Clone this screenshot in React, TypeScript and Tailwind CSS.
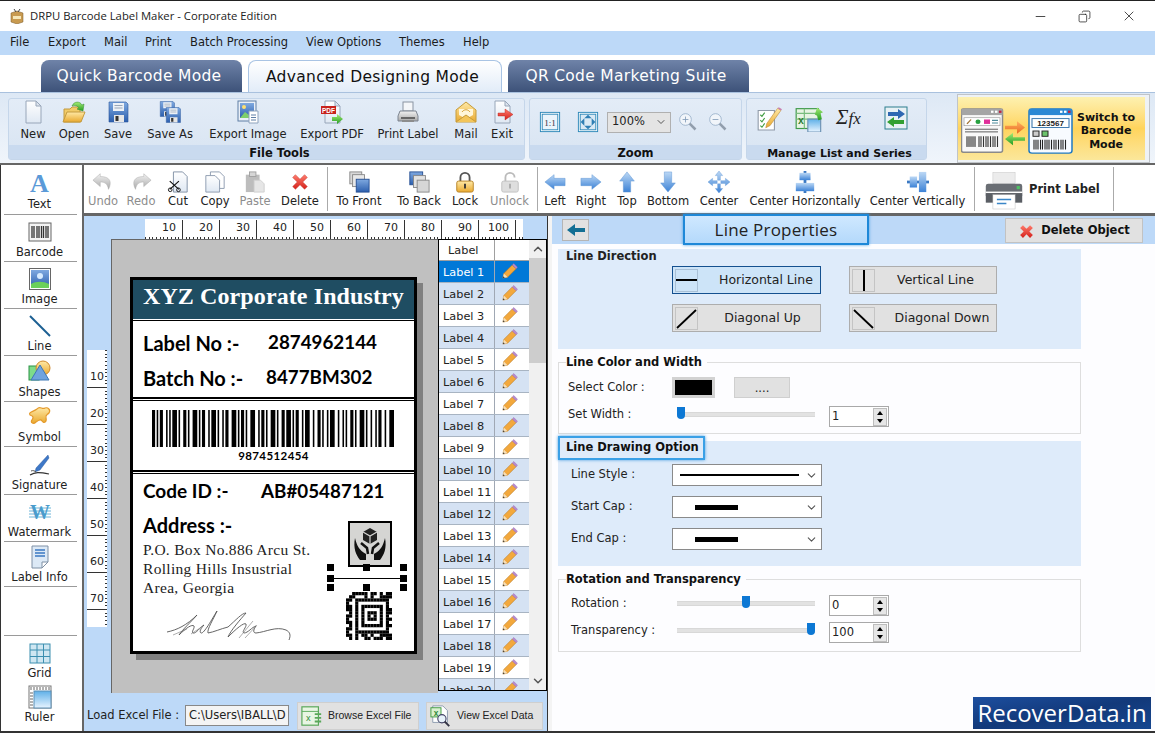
import type { ReactNode } from "react";
import { ChevronDown, ChevronUp, Minus, X, Copy } from "lucide-react";

const S = ({ s = 24, h, vb = "0 0 24 24", children }: { s?: number; h?: number; vb?: string; children: ReactNode }) => (
  <svg width={s} height={h ?? s} viewBox={vb} className="block shrink-0">
    {children}
  </svg>
);

function Gradients() {
  const g = (id: string, a: string, b: string) => (
    <linearGradient id={id} x1="0" y1="0" x2="0" y2="1">
      <stop offset="0" stopColor={a} />
      <stop offset="1" stopColor={b} />
    </linearGradient>
  );
  return (
    <svg width="0" height="0" className="block h-0">
      <defs>
        {g("gBlue", "#7fa9e0", "#2c5fae")}
        {g("gYel", "#ffe9a6", "#e9a92f")}
        {g("gGray", "#f2f2f2", "#a9a9a9")}
        {g("gDoc", "#ffffff", "#dfe8f3")}
        {g("gArrow", "#bcd8f5", "#3c82d6")}
        {g("gGreen", "#a6ec74", "#229c22")}
        {g("gRed", "#ff7d6e", "#d4201a")}
        {g("gOrange", "#ffb060", "#e86a20")}
        {g("gSky", "#5fb0e8", "#e8f4ff")}
      </defs>
    </svg>
  );
}

const Page = () => (
  <>
    <path d="M5 1h10l5 5v17H5z" fill="url(#gDoc)" stroke="#98a6b9" />
    <path d="M15 1v5h5z" fill="#dde4ee" stroke="#98a6b9" />
  </>
);

const Floppy = ({ x = 0, y = 0, k = 1 }: { x?: number; y?: number; k?: number }) => (
  <g transform={`translate(${x} ${y}) scale(${k})`}>
    <path d="M3 2h17l2 2v18H3z" fill="url(#gBlue)" stroke="#28549a" strokeWidth=".6" />
    <rect x="7" y="3" width="11" height="8" fill="#edf1f6" />
    <path d="M8.500 5.500h8M8.500 8h8" stroke="#9aa7b8" />
    <rect x="8" y="15" width="10" height="7" fill="#e6e6e6" />
    <rect x="9.500" y="16" width="3" height="5" fill="#333" />
  </g>
);

const icons: Record<string, ReactNode> = {
  new: <S><Page /></S>,
  open: (
    <S>
      <path d="M2 9h6l2-2h8v15H2z" fill="#f1cb68" stroke="#c39a3e" />
      <path d="M5 12h18l-4 10H1z" fill="url(#gYel)" stroke="#c39a3e" />
      <path d="M10 6c2-5 8-5 10-1l2-1-1 7-6-2 2-1c-1-2-4-3-7-2z" fill="url(#gGreen)" stroke="#2c8a2c" strokeWidth=".5" />
    </S>
  ),
  save: <S><Floppy /></S>,
  saveas: (
    <S>
      <Floppy x={0} y={0} k={0.75} />
      <Floppy x={6} y={6} k={0.75} />
    </S>
  ),
  exportImage: (
    <S>
      <rect x="2" y="1" width="18" height="20" fill="#e9eff7" stroke="#5f7fa6" />
      <rect x="4" y="3" width="14" height="15" fill="url(#gBlue)" />
      <path d="M4 18l5-6 4 3 5-3v6z" fill="#7ecf6a" />
      <circle cx="8" cy="7" r="2" fill="#ffe070" />
      <path d="M13 11h9v12h-9z" fill="#fff" stroke="#8ea3bd" />
      <path d="M15 15h5M15 17.500h5M15 20h5" stroke="#5f7fa6" />
    </S>
  ),
  pdf: (
    <S>
      <Page />
      <rect x="1" y="6" width="15" height="8" fill="#c8231d" />
      <text x="8.500" y="12.500" textAnchor="middle" fontSize="6.500" fontWeight="700" fill="#fff" fontFamily="Liberation Sans">PDF</text>
      <path d="M12 17h5v-3l6 5-6 5v-3h-5z" fill="url(#gGreen)" />
    </S>
  ),
  printer: (
    <S>
      <rect x="7" y="2" width="10" height="9" fill="#f4f6f9" stroke="#8a94a2" />
      <path d="M4 11h16l2 5v5H2v-5z" fill="url(#gGray)" stroke="#7c8490" />
      <rect x="5" y="17" width="14" height="2" fill="#666" />
      <rect x="6" y="20" width="12" height="2" fill="#8d8d8d" />
    </S>
  ),
  mail: (
    <S>
      <path d="M2 10L12 2l10 8v12H2z" fill="url(#gYel)" stroke="#c59b3a" />
      <path d="M5 9h14v6l-7 4-7-4z" fill="#fff6da" />
      <path d="M8 12c2-3 6-3 8 0" stroke="#d6a33a" fill="none" />
      <path d="M2 22l10-7 10 7" fill="#f3c55a" stroke="#c59b3a" />
    </S>
  ),
  exit: (
    <S>
      <Page />
      <path d="M8 13h7V9l8 5.500-8 5.500v-4H8z" fill="url(#gRed)" stroke="#b51c16" strokeWidth=".4" />
    </S>
  ),
  oneToOne: (
    <S s={22}>
      <rect x="1.500" y="1.500" width="21" height="21" fill="#fff" stroke="#2b86b8" />
      <rect x="3.500" y="3.500" width="17" height="17" fill="#eaf4fb" stroke="#2b86b8" />
      <text x="12" y="16" textAnchor="middle" fontSize="10" fill="#334" fontFamily="Liberation Serif">1:1</text>
    </S>
  ),
  fit: (
    <S s={22}>
      <rect x="1.500" y="1.500" width="21" height="21" fill="#fff" stroke="#2b86b8" />
      <rect x="3.500" y="3.500" width="17" height="17" fill="#d9e9f4" stroke="#2b86b8" />
      <path d="M12 4l4 4H8zM12 20l4-4H8zM4 12l4-4v8zM20 12l-4-4v8z" fill="#2f7fb4" />
    </S>
  ),
  zoomIn: (
    <S s={20}>
      <circle cx="9" cy="9" r="7" fill="#f3f7fb" stroke="#8fa8c4" />
      <path d="M9 5.500v7M5.500 9h7" stroke="#7a94b2" />
      <path d="M14 14l7 7" stroke="#8a97a6" strokeWidth="3" />
    </S>
  ),
  zoomOut: (
    <S s={20}>
      <circle cx="9" cy="9" r="7" fill="#f3f7fb" stroke="#8fa8c4" />
      <path d="M5.500 9h7" stroke="#7a94b2" />
      <path d="M14 14l7 7" stroke="#8a97a6" strokeWidth="3" />
    </S>
  ),
  list: (
    <S s={26}>
      <path d="M2 5h15v18H2z" fill="#fff" stroke="#8f9aa8" />
      <path d="M4 9l1.500 1.500L8 7M4 14l1.500 1.500L8 12M4 19l1.500 1.500L8 17" stroke="#3d9a3d" fill="none" />
      <path d="M10 17L20 3l3 2-10 14-4 2z" fill="url(#gYel)" stroke="#b5822a" strokeWidth=".5" />
      <path d="M20 3l1-1 3 2-1 1z" fill="#c87fb0" />
    </S>
  ),
  excelArrow: (
    <S s={28}>
      <rect x="1" y="4" width="19" height="17" fill="#e7f4e3" stroke="#3f9a4a" />
      <path d="M1 8h19M1 13h19M8 4v17" stroke="#79bd7e" />
      <text x="5" y="17" textAnchor="middle" fontSize="9" fontWeight="700" fill="#2b7d34" fontFamily="Liberation Sans">x</text>
      <path d="M11 13h11v11H11z" fill="url(#gSky)" stroke="#6e93b5" />
      <path d="M17 9l2-6 5 4-2 1 1 5-3 1-1-4z" fill="url(#gGreen)" />
    </S>
  ),
  swap: (
    <S s={24}>
      <rect x="1" y="1" width="22" height="22" fill="#e8f1f5" stroke="#2d7f8e" />
      <path d="M4 6h10V3l7 5-7 5v-3H4z" fill="#2e68b2" />
      <path d="M20 14H10v-3l-7 5 7 5v-3h10z" fill="#32a032" />
    </S>
  ),
  undo: (
    <S>
      <path d="M9 3L1 10l8 7v-5c5 0 8 2 9 8 4-8 2-14-9-14z" fill="url(#gGray)" stroke="#a8a8a8" strokeWidth=".5" />
    </S>
  ),
  redo: (
    <S>
      <path d="M15 3l8 7-8 7v-5c-5 0-8 2-9 8-4-8-2-14 9-14z" fill="url(#gGray)" stroke="#a8a8a8" strokeWidth=".5" />
    </S>
  ),
  cut: (
    <S>
      <path d="M7 1h10l5 5v17H7z" fill="url(#gDoc)" stroke="#7d8da3" />
      <path d="M3 11l10 9M13 11L3 20" stroke="#111" strokeWidth="1.300" />
      <circle cx="3.500" cy="20.500" r="2" fill="none" stroke="#111" />
      <circle cx="12.500" cy="20.500" r="2" fill="none" stroke="#111" />
    </S>
  ),
  copy: (
    <S>
      <path d="M7 1h10l5 5v13H7z" fill="#fff" stroke="#8a98ad" />
      <path d="M2 5h10l5 5v13H2z" fill="url(#gDoc)" stroke="#8a98ad" />
    </S>
  ),
  paste: (
    <S>
      <rect x="2" y="4" width="15" height="19" fill="#bdbdbd" />
      <rect x="6" y="1" width="7" height="5" fill="#d6d6d6" stroke="#a0a0a0" />
      <path d="M11 10h7l4 4v9H11z" fill="#e6e6e6" stroke="#cfcfcf" />
    </S>
  ),
  del: (
    <S>
      <path d="M4 7l3-3 5 5 5-5 3 3-5 5 5 5-3 3-5-5-5 5-3-3 5-5z" fill="url(#gRed)" stroke="#c13a30" strokeWidth=".5" />
    </S>
  ),
  toFront: (
    <S>
      <rect x="2" y="1" width="13" height="13" fill="#d8d8d8" stroke="#888" />
      <rect x="5" y="4" width="13" height="13" fill="#e8e8e8" stroke="#888" />
      <rect x="9" y="9" width="14" height="14" fill="url(#gBlue)" stroke="#254f93" />
    </S>
  ),
  toBack: (
    <S>
      <rect x="2" y="1" width="14" height="14" fill="url(#gBlue)" stroke="#254f93" />
      <rect x="6" y="5" width="13" height="13" fill="#e2e2e2" stroke="#888" />
      <rect x="10" y="10" width="13" height="13" fill="#d6d6d6" stroke="#888" />
    </S>
  ),
  lock: (
    <S>
      <path d="M7 11V7a5 5 0 0 1 10 0v4" fill="none" stroke="#555" strokeWidth="2" />
      <rect x="3" y="11" width="18" height="12" rx="2" fill="url(#gYel)" stroke="#b37f22" />
      <path d="M12 14v5" stroke="#333" strokeWidth="2" />
    </S>
  ),
  unlock: (
    <S>
      <path d="M7 11V7a5 5 0 0 1 10 0" fill="none" stroke="#bbb" strokeWidth="2" />
      <rect x="3" y="11" width="18" height="12" rx="2" fill="#dedede" stroke="#c0c0c0" />
      <path d="M12 14v5" stroke="#aaa" strokeWidth="2" />
    </S>
  ),
  left: <S><path d="M1 12l10-8v4h12v8H11v4z" fill="url(#gArrow)" stroke="#5b93d2" strokeWidth=".5" /></S>,
  right: <S><path d="M23 12L13 4v4H1v8h12v4z" fill="url(#gArrow)" stroke="#5b93d2" strokeWidth=".5" /></S>,
  top: <S><path d="M12 1L4 11h4v12h8V11h4z" fill="url(#gArrow)" stroke="#5b93d2" strokeWidth=".5" /></S>,
  bottom: <S><path d="M12 23L4 13h4V1h8v12h4z" fill="url(#gArrow)" stroke="#5b93d2" strokeWidth=".5" /></S>,
  center: (
    <S>
      <path d="M12 0l4 5h-2.500v5h-3V5H8zM12 24l4-5h-2.500v-5h-3v5H8zM0 12l5-4v2.500h5v3H5V16zM24 12l-5-4v2.500h-5v3h5V16z" fill="url(#gArrow)" stroke="#5b93d2" strokeWidth=".4" />
    </S>
  ),
  centerH: (
    <S>
      <rect x="10.500" y="0" width="3" height="24" fill="#3a78c2" />
      <rect x="6" y="2" width="12" height="8" fill="url(#gArrow)" />
      <rect x="2" y="13" width="20" height="9" fill="url(#gArrow)" />
    </S>
  ),
  centerV: (
    <S>
      <rect x="0" y="10.500" width="24" height="3" fill="#3a78c2" />
      <rect x="3" y="6" width="8" height="12" fill="url(#gArrow)" />
      <rect x="13" y="1" width="8" height="22" fill="url(#gArrow)" />
    </S>
  ),
  bigPrinter: (
    <S s={38} h={40}>
      <rect x="5" y="1" width="14" height="7" fill="#ececec" stroke="#c0c0c0" strokeWidth=".3" />
      <rect x="0.500" y="8" width="23" height="9" rx="1.500" fill="#6a6e74" />
      <rect x="20" y="9.500" width="2" height="2" fill="#4fc264" />
      <rect x="0.500" y="13" width="23" height="1" fill="#fff" />
      <rect x="0.500" y="14" width="23" height="6" fill="#5a5e64" />
      <rect x="5" y="15" width="14" height="9" fill="#fff" stroke="#bbb" strokeWidth=".3" />
      <path d="M7.500 18h9M7.500 20.500h6" stroke="#3a86c8" />
    </S>
  ),
  barcode: (
    <S>
      <rect x="1" y="3" width="22" height="18" fill="#f4f4f4" stroke="#666" />
      <path d="M4 6v12M6 6v12M9 6v12M11 6v12M13.500 6v12M15.500 6v12M18 6v12M20 6v12" stroke="#333" strokeWidth="1.300" />
    </S>
  ),
  image: (
    <S>
      <rect x="1.500" y="1.500" width="21" height="21" fill="#fff" stroke="#666" />
      <rect x="3" y="3" width="18" height="18" fill="url(#gBlue)" />
      <circle cx="12" cy="9" r="3" fill="#d8ecff" />
      <path d="M3 17c5-3 12-3 18 0v4H3z" fill="#6bd05a" />
    </S>
  ),
  line: <S><path d="M2 2l20 20" stroke="#1c5f92" strokeWidth="2" /></S>,
  shapes: (
    <S>
      <rect x="1" y="6" width="10" height="14" fill="#7ddc8a" stroke="#2d9146" />
      <circle cx="15" cy="8" r="7" fill="url(#gYel)" stroke="#d08a2c" />
      <path d="M12 5l9 15H3z" fill="#6fa3de" stroke="#3e78b5" />
    </S>
  ),
  symbol: (
    <S>
      <path d="M9 4c3-4 5 1 8-1 3-1 6 2 4 5-2 2-4 2-3 5 1 4-2 6-4 3-1-2-3-1-6 1-3 3-6 0-4-2 2-3 1-4-2-5-2-3 3-3 7-6z" fill="url(#gYel)" stroke="#e49a2c" strokeWidth="1.200" />
    </S>
  ),
  signature: (
    <S>
      <path d="M8 15L20 2l1 3-9 12-5 2z" fill="#3e78c8" stroke="#204e90" strokeWidth=".4" />
      <path d="M2 22c5-3 9-3 19-1" stroke="#333" strokeWidth="1.200" fill="none" />
      <path d="M3 18c2-1 4 0 5 1" stroke="#555" fill="none" />
    </S>
  ),
  watermark: (
    <S>
      <path d="M1 8h22M1 11h22M1 14h22M1 17h22" stroke="#6db4d8" />
      <text x="12" y="19" textAnchor="middle" fontSize="20" fontWeight="700" fill="#4a9ccc" fontFamily="Liberation Serif">W</text>
    </S>
  ),
  info: (
    <S>
      <path d="M4 1h16v16l-6 6H4z" fill="#dce9f6" stroke="#7f90a5" />
      <path d="M7 5h10M7 8h10M7 11h10" stroke="#3a78c2" strokeWidth="1.300" />
      <path d="M14 23v-6h6z" fill="#fff" stroke="#7f90a5" />
    </S>
  ),
  grid: (
    <S>
      <rect x="2" y="3" width="20" height="19" fill="#cfe7f2" stroke="#3c8fb0" />
      <path d="M2 9h20M2 15.500h20M9 3v19M15.500 3v19" stroke="#3c8fb0" />
    </S>
  ),
  ruler: (
    <S>
      <rect x="1" y="1" width="22" height="22" fill="#fff" stroke="#777" />
      <rect x="6" y="6" width="17" height="17" fill="url(#gSky)" stroke="#5d8fb5" />
      <path d="M3 2v3M6 2v3M9 2v3M12 2v3M15 2v3M18 2v3M21 2v3M2 8h3M2 11h3M2 14h3M2 17h3M2 20h3" stroke="#666" />
    </S>
  ),
  excel: (
    <S s={22}>
      <rect x="1" y="2" width="18" height="20" fill="#e8f5e3" stroke="#59a85a" strokeWidth="1.300" />
      <path d="M1 7h18" stroke="#59a85a" />
      <text x="8" y="17" textAnchor="middle" fontSize="10" fill="#2f8a3a" fontFamily="Liberation Sans">x</text>
      <path d="M15 10h7M15 14h7M15 18h7" stroke="#59a85a" strokeWidth="2" />
    </S>
  ),
  excelZoom: (
    <S s={22}>
      <path d="M3 1h11l5 5v13H3z" fill="#fff" stroke="#8a98ad" />
      <rect x="1" y="3" width="11" height="10" fill="#d9f0d0" stroke="#3c983c" />
      <text x="6.500" y="11.500" textAnchor="middle" fontSize="9" fontWeight="700" fill="#2f8a3a" fontFamily="Liberation Sans">x</text>
      <circle cx="13" cy="15" r="4.500" fill="#e8f3fb" stroke="#446" strokeWidth="1.200" />
      <path d="M16 18l5 5" stroke="#334" strokeWidth="2" />
    </S>
  ),
};

const Pencil = () => (
  <svg width="17" height="17" viewBox="0 0 18 18" className="block">
    <path d="M2 16l1-5L12 2l4 4-9 9z" fill="#f3a83c" stroke="#b87a24" strokeWidth=".6" />
    <path d="M12 2l1.500-1.500 4 4L16 6z" fill="#b98ad0" stroke="#8b62a0" strokeWidth=".4" />
    <path d="M2 16l1-5 4 4z" fill="#f6dfb8" />
    <path d="M2 16l.500-2 1.500 1.500z" fill="#333" />
  </svg>
);

const Tool = ({ icon, label, w, dim }: { icon: ReactNode; label: string; w: string; dim?: boolean }) => (
  <div className={`${w} flex flex-col items-center shrink-0 gap-[3px]`}>
    {icon}
    <span className={`whitespace-nowrap leading-[14px] ${dim ? "text-[#8d8d8d]" : "text-[#222]"}`}>{label}</span>
  </div>
);

// edit toolbar item: same thing, slightly smaller icon
const EditTool = ({ icon, label, w, dim }: { icon: ReactNode; label: string; w: string; dim?: boolean }) => (
  <div className={`${w} flex flex-col items-center shrink-0 gap-[1px] [&_svg]:size-[22px]`}>
    {icon}
    <span className={`whitespace-nowrap leading-[14px] ${dim ? "text-[#8d8d8d]" : "text-[#222]"}`}>{label}</span>
  </div>
);

function RibbonGroup({ title, w, band = "", body = "", children }: { title: string; w: string; band?: string; body?: string; children: ReactNode }) {
  return (
    <div className={`${w} h-[62px] shrink-0 flex flex-col rounded-[3px] border border-[#c5d6ea] bg-gradient-to-b from-[#e3ecf7] to-[#d8e4f2]`}>
      <div className={`h-[46px] flex items-center pl-[3px] ${body}`}>{children}</div>
      <div className={`h-[14px] bg-[#c9daef] flex items-center justify-center pt-[3px] font-bold text-[#111] leading-none whitespace-nowrap ${band}`}>{title}</div>
    </div>
  );
}

const Tab = ({ label, w, active }: { label: string; w: string; active?: boolean }) => (
  <div
    className={`${w} h-[32px] rounded-t-[8px] flex items-center justify-center pr-[5px] pt-[2px] text-[15.500px] tracking-[.3px] ${
      active
        ? "bg-gradient-to-b from-white to-[#e2ecf8] border border-b-0 border-[#a9c4e4] text-[#111]"
        : "bg-gradient-to-b from-[#6f83a8] to-[#3d5279] text-white"
    }`}
  >
    {label}
  </div>
);

const sideItems = [
  { i: "barcode", l: "Barcode", h: "h-[47px]" },
  { i: "image", l: "Image", h: "h-[47px]" },
  { i: "line", l: "Line", h: "h-[47px]" },
  { i: "shapes", l: "Shapes", h: "h-[46px]" },
  { i: "symbol", l: "Symbol", h: "h-[45px]" },
  { i: "signature", l: "Signature", h: "h-[48px]" },
  { i: "watermark", l: "Watermark", h: "h-[47px]" },
  { i: "info", l: "Label Info", h: "h-[45px]" },
];

const SideItem = ({ icon, label, h }: { icon: string; label: string; h: string }) => (
  <div className={`${h} ml-[3px] mr-[5px] pr-[2px] flex flex-col items-center justify-end pb-[1px] border-b border-[#9a9a9a]`}>
    {icons[icon]}
    <span className="leading-[16px] text-[#222]">{label}</span>
  </div>
);

function HRuler() {
  const nums = [10, 20, 30, 40, 50, 60, 70, 80, 90, 100];
  return (
    <div className="ml-[34px] w-[378px] h-[20px] bg-white flex flex-col justify-end">
      <div className="flex h-[17px] pl-[1px]">
        {nums.map((n) => (
          <div key={n} className="w-[37px] border-r border-[#333] text-right pr-[6px] text-[11px] leading-[16px] text-[#222]">
            {n}
          </div>
        ))}
      </div>
      <div className="h-[2px] bg-[repeating-linear-gradient(to_right,#333_0,#333_1px,transparent_1px,transparent_3.700px)]" />
    </div>
  );
}

function VRuler() {
  const nums = [10, 20, 30, 40, 50, 60, 70];
  return (
    <div className="w-[20px] h-[277px] mt-[134px] bg-white shrink-0 flex">
      <div className="flex-1 pt-[1px]">
        {nums.map((n) => (
          <div key={n} className="h-[37px] border-b border-[#333] flex items-end justify-end text-[11px] leading-[20px] pr-[1px] text-[#222]">
            {n}
          </div>
        ))}
      </div>
      <div className="w-[2px] bg-[repeating-linear-gradient(to_bottom,#333_0,#333_1px,transparent_1px,transparent_3.700px)]" />
    </div>
  );
}

const barWidths = [2, 1, 1, 1, 2, 2, 1, 1, 1, 1, 3, 1, 1, 2, 2, 1, 1, 2, 3, 1, 1, 1, 2, 2, 1, 1, 3, 1, 1, 2, 1, 1, 2, 2, 3, 1, 1, 1, 2, 1, 1, 2, 3, 2, 1, 1, 2, 1, 1, 2, 3, 1, 1, 2, 2, 1, 3, 1, 1, 1, 2, 2, 1, 1, 3, 2, 1, 2, 2, 1, 1, 2, 1, 1, 3, 2, 1, 2, 1, 1, 1, 2, 2, 1, 1, 2, 3, 1, 1, 2, 1, 2, 1, 1, 2, 2, 1, 2, 3];

function Barcode() {
  let x = 0;
  const rects: ReactNode[] = [];
  barWidths.forEach((w, i) => {
    if (i % 2 === 0) rects.push(<rect key={i} x={x} y="0" width={w} height="37" fill="#000" />);
    x += w;
  });
  return (
    <svg width="242" height="37" viewBox={`0 0 ${x} 37`} preserveAspectRatio="none" className="block">
      {rects}
    </svg>
  );
}

const codeRows = [
  "..#####.##.#.##",
  ".##...#.#..####",
  "##.###########.",
  "#..#.........#.",
  "##.#.#######.#.",
  "##.#.#.....#.##",
  ".#.#.#.###.#.##",
  "##.#.#.#.#.#.#.",
  "#..#.#.###.#.##",
  "##.#.#.....#.#.",
  ".#.#.#######.##",
  "##.#.........#.",
  "#..###########.",
  "##.#.##.#..####",
  ".#.#..##.###.##",
];

function DataCode() {
  return (
    <svg width="46" height="48" viewBox="0 0 15 15" preserveAspectRatio="none" className="block">
      {codeRows.map((r, y) =>
        r.split("").map((c, x) => (c === "#" ? <rect key={`${x}-${y}`} x={x} y={y} width="1.020" height="1.020" fill="#000" /> : null))
      )}
    </svg>
  );
}

function Label() {
  return (
    <div className="ml-[18px] mt-[37px] w-[287px] h-[377px] border-[3px] border-black bg-white shadow-[6px_6px_0_#808080] flex flex-col text-black relative">
      <div className="h-[40px] shrink-0 bg-[#1f4d62] border-b border-white flex items-center pl-[10px] pb-[7px] font-['Liberation_Serif',serif] font-bold text-[24px] tracking-[.1px] text-white">
        XYZ Corporate Industry
      </div>
      <div className="h-[79px] shrink-0 border-t border-black border-b-2 flex flex-col gap-[5px] pt-[7px] pl-[10px] font-['Lato',sans-serif] font-bold text-[20px]">
        <div className="flex">
          <span className="w-[125px]">Label No :-</span>
          <span className="text-[18.800px]">2874962144</span>
        </div>
        <div className="flex">
          <span className="w-[123px]">Batch No :-</span>
          <span className="text-[18.800px]">8477BM302</span>
        </div>
      </div>
      <div className="h-[72px] shrink-0 mt-[1px] border-t border-black border-b-2 flex flex-col items-center pt-[9px] font-['Lato',sans-serif] font-bold text-[11.500px] leading-[16px] tracking-[.4px]">
        <div className="ml-[-2px]"><Barcode /></div>
        <span className="mt-[1px]">9874512454</span>
      </div>
      <div className="flex-1 mt-[1px] border-t border-black pl-[10px] pt-[3px] font-['Lato',sans-serif] font-bold text-[20px]">
        <div className="flex">
          <span className="w-[118px] text-[19px]">Code ID :-</span>
          <span className="text-[18.800px]">AB#05487121</span>
        </div>
        <div className="mt-[7px] text-[20px] leading-[24px]">Address :-</div>
        <div className="mt-[3px] font-['Liberation_Serif',serif] font-normal text-[15.500px] leading-[19px] tracking-[.3px] text-[#222]">
          <div>P.O. Box No.886 Arcu St.</div>
          <div>Rolling Hills Insustrial</div>
          <div>Area, Georgia</div>
        </div>
      </div>
      <div className="absolute left-[215px] top-[241px] w-[44px] h-[46px] border-2 border-black bg-[#d5d5d3] flex items-center justify-center">
        <svg width="34" height="36" viewBox="0 0 34 36" className="block">
          <path d="M17 2l7 4v8l-7 4-7-4V6z" fill="#222" />
          <path d="M10 6l7 4 7-4M17 10v8" stroke="#d5d5d3" strokeWidth="1.200" fill="none" />
          <path d="M2 12c2 8 4 12 11 16v6H7c-4-5-7-12-5-22zM32 12c-2 8-4 12-11 16v6h6c4-5 7-12 5-22z" fill="#111" />
          <path d="M8 17l6 5 1 6M26 17l-6 5-1 6" stroke="#111" strokeWidth="2.500" fill="none" />
        </svg>
      </div>
      <div className="absolute left-[197px] top-[298px] w-[73px] h-px bg-black" />
      {[
        "left-[194px] top-[284px]",
        "left-[230px] top-[284px]",
        "left-[267px] top-[284px]",
        "left-[194px] top-[295px]",
        "left-[267px] top-[295px]",
        "left-[194px] top-[304px]",
        "left-[230px] top-[304px]",
        "left-[267px] top-[304px]",
      ].map((p) => (
        <div key={p} className={`absolute ${p} w-[7px] h-[7px] bg-black`} />
      ))}
      <div className="absolute left-[213px] top-[312px]"><DataCode /></div>
      <svg width="150" height="34" viewBox="0 0 150 34" className="absolute left-[32px] top-[330px]">
        <path d="M2 22c10-2 20-7 30-17-7 8-14 14-18 20 7-7 13-11 15-9 1 2-3 6-1 7 3 1 7-6 11-8-3 3-5 7-3 8 3 1 11-14 16-22-4 9-10 18-9 22 6-1 12-4 20-6 8-7 14-14 18-14-6 7-15 17-18 24 8-8 16-15 18-13 1 3-5 8-2 9 4 0 8-6 12-7-3 4-3 7 0 7 10-1 20-7 30-3 4 2 5 5 3 10" fill="none" stroke="#555" strokeWidth=".9" />
        <path d="M8 25l14-6M74 28l14-17M80 28l12-13M26 24l9-6" fill="none" stroke="#777" strokeWidth=".6" />
      </svg>
    </div>
  );
}

function LabelList() {
  const rows = Array.from({ length: 20 }, (_, i) => i + 1);
  return (
    <div className="w-[109px] h-[452px] border border-black bg-white flex shrink-0 overflow-hidden text-[11.300px]">
      <div className="w-[90px] overflow-hidden">
        <div className="h-[21px] flex border-b border-[#a0a0a0]">
          <div className="w-[56px] border-r border-[#a0a0a0] pl-[9px] leading-[22px]">Label</div>
        </div>
        {rows.map((n) => {
          const sel = n === 1;
          const odd = n % 2 === 0;
          return (
            <div key={n} className={`h-[22px] flex border-b border-[#a8b4c2] ${sel ? "bg-[#0078d7] text-white" : odd ? "bg-[#d5e2f3]" : "bg-white"}`}>
              <div className="w-[56px] border-r border-[#a0a8b4] pl-[4px] leading-[23px] whitespace-nowrap">Label {n}</div>
              <div className="flex-1 flex items-center justify-center pr-[5px]"><Pencil /></div>
            </div>
          );
        })}
      </div>
      <div className="flex-1 bg-[#f0f0f0] flex flex-col items-center">
        <ChevronUp size={14} strokeWidth={2.500} className="my-[2px] text-[#555]" />
        <div className="w-full h-[105px] bg-[#cdcdcd]" />
        <ChevronDown size={14} strokeWidth={2.500} className="mt-auto mb-[2px] text-[#555]" />
      </div>
    </div>
  );
}

const DirButton = ({ label, active, pad = "", children }: { label: string; active?: boolean; pad?: string; children: ReactNode }) => (
  <div className={`h-[28px] flex items-center border pl-[2px] ${active ? "bg-[#cde4f8] border-[#14508f]" : "bg-[#e1e1e1] border-[#adadad]"}`}>
    <div className={`w-[23px] h-[23px] border flex items-center justify-center ${active ? "border-[#a9c0d6]" : "border-[#c4c4c4]"}`}>{children}</div>
    <span className={`flex-1 text-center text-[12.500px] text-[#222] pt-[1px] ${pad}`}>{label}</span>
  </div>
);

const Legend = ({ children }: { children: ReactNode }) => (
  <legend className="ml-[7px] pr-[5px] font-bold leading-[14px] text-[#111]">{children}</legend>
);

const Slider = ({ pos }: { pos: string }) => (
  <div className="w-[138px] h-[5px] mb-[4px] bg-[#e2e2e2] border-y border-[#d8d8d8] relative shrink-0">
    <div className={`absolute ${pos} top-[-6px] w-[8px] h-[12px] bg-[#0d78d4] rounded-b-[4px]`} />
  </div>
);

const Spin = ({ v }: { v: string }) => (
  <div className="w-[60px] h-[21px] ml-[14px] border border-[#a9a9a9] bg-white flex items-center justify-between shrink-0">
    <span className="pl-[2px]">{v}</span>
    <div className="w-[14px] h-[18px] mr-[1px] bg-[#e6e6e6] border border-[#bdbdbd] flex flex-col items-center justify-around">
      <div className="w-0 h-0 border-x-[3px] border-x-transparent border-b-[4px] border-b-black" />
      <div className="w-0 h-0 border-x-[3px] border-x-transparent border-t-[4px] border-t-black" />
    </div>
  </div>
);

const StyleSelect = ({ label, bar }: { label: string; bar: ReactNode }) => (
  <div className="flex items-center h-[22px]">
    <span className="w-[114px] pl-[13px] text-[#222]">{label}</span>
    <div className="w-[150px] h-[22px] bg-white border border-[#8a8a8a] flex items-center">
      {bar}
      <ChevronDown size={13} className="ml-auto mr-[3px] text-[#555]" />
    </div>
  </div>
);

const SoftButton = ({ icon, label, w }: { icon: ReactNode; label: string; w: string }) => (
  <div className={`${w} h-[28px] flex items-center gap-[5px] bg-[#e1e1e1] border border-[#cfcfcf] pl-[3px] shrink-0 font-['Liberation_Sans',sans-serif] text-[10.500px] text-[#222]`}>
    {icon}
    <span className="whitespace-nowrap">{label}</span>
  </div>
);

const SwitchArt = () => (
  <svg width="112" height="46" viewBox="0 0 112 52" preserveAspectRatio="none" className="block shrink-0 mt-[5px]">
    <rect x="0.500" y="1" width="41" height="49" rx="2" fill="#f8f8f8" stroke="#8a8a8a" strokeWidth="1.500" />
    <rect x="0.500" y="1" width="41" height="7" fill="#a5a5a5" />
    <rect x="30" y="3" width="2.500" height="2.500" fill="#fff" />
    <rect x="34" y="3" width="2.500" height="2.500" fill="#fff" />
    <rect x="38" y="3" width="2.500" height="2.500" fill="#c02040" />
    <rect x="3" y="11" width="36" height="9" fill="#fff" stroke="#999" strokeWidth=".7" />
    <path d="M6 18l4-5" stroke="#a07030" strokeWidth="1.300" />
    <circle cx="17" cy="15.500" r="2.500" fill="#27a040" />
    <rect x="23" y="13" width="6" height="5" fill="#e0309a" />
    <path d="M31 14h6M31 17h6" stroke="#4a8a9a" strokeWidth="1.300" />
    <path d="M4 24h33M4 27h33" stroke="#555" />
    <rect x="5" y="32" width="10" height="12" fill="#555" opacity=".7" />
    <path d="M18 32v12M20 32v12M22.500 32v12M25 32v12M27 32v12M29.500 32v12M32 32v12M34 32v12M36.500 32v12" stroke="#333" strokeWidth="1.100" />
    <path d="M44 20h12v-5l8 7-8 7v-5H44z" fill="url(#gOrange)" />
    <path d="M64 33H52v-5l-8 7 8 7v-5h12z" fill="url(#gGreen)" />
    <g transform="translate(-4 0)">
      <rect x="72" y="1" width="43" height="50" rx="3" fill="#f8fbff" stroke="#1f7ac4" strokeWidth="1.500" />
      <rect x="72" y="1" width="43" height="7" fill="#2b88d4" />
      <rect x="103" y="3" width="2.500" height="2.500" fill="#fff" />
      <rect x="107" y="3" width="2.500" height="2.500" fill="#fff" />
      <rect x="111" y="3" width="2.500" height="2.500" fill="#c02040" />
      <rect x="75" y="12" width="37" height="10" fill="#fff" stroke="#2b6da8" strokeWidth="1" />
      <text x="93.500" y="20.500" textAnchor="middle" fontSize="8" fontWeight="700" fill="#222" fontFamily="Liberation Sans">123567</text>
      <rect x="76" y="26" width="6" height="6" fill="#ccc" stroke="#222" />
      <rect x="85" y="26" width="6" height="6" fill="#6cc36c" stroke="#222" />
      <path d="M77 36v11M79 36v11M81 36v11M83.500 36v11M85.500 36v11M88 36v11M90 36v11M92 36v11M94.500 36v11M97 36v11M99 36v11M101.500 36v11M104 36v11M106 36v11M108.500 36v11" stroke="#222" strokeWidth="1.100" />
    </g>
  </svg>
);

export default function App() {
  return (
    <div className="w-[1155px] h-[733px] overflow-hidden bg-white flex flex-col border-t border-[#222] font-['DejaVu_Sans',sans-serif] text-[11.500px] text-[#222]">
      <Gradients />
      {/* title bar */}
      <div className="h-[30px] flex items-center shrink-0 bg-white">
        <svg width="16" height="16" viewBox="0 0 16 16" className="block ml-[9px]">
          <path d="M2 5l6-2 6 2v9l-6 2-6-2z" fill="#c89a50" stroke="#7a5a2a" strokeWidth=".5" />
          <path d="M5 1l2 3M11 1l-2 3" stroke="#444" />
          <path d="M4 8h8v3H4z" fill="#f6e7b8" />
        </svg>
        <span className="ml-[5px] font-['Open_Sans',sans-serif] text-[11.300px] text-[#222]">DRPU Barcode Label Maker - Corporate Edition</span>
        <div className="ml-auto flex items-center gap-[30px] pr-[18px] text-[#222]">
          <Minus size={15} strokeWidth={1.300} />
          <Copy size={13} strokeWidth={1.400} className="-scale-x-100" />
          <X size={16} strokeWidth={1.200} />
        </div>
      </div>
      {/* menu */}
      <div className="h-[24px] shrink-0 bg-[#bdd9f8] flex items-center pl-[10px] text-[#1c1c1c]">
        <span className="w-[38px]">File</span>
        <span className="w-[56px]">Export</span>
        <span className="w-[41px]">Mail</span>
        <span className="w-[45px]">Print</span>
        <span className="w-[116px]">Batch Processing</span>
        <span className="w-[93px]">View Options</span>
        <span className="w-[64px]">Themes</span>
        <span>Help</span>
      </div>
      {/* mode tabs */}
      <div className="h-[37px] shrink-0 flex items-end pl-[41px] gap-[6px]">
        <Tab label="Quick Barcode Mode" w="w-[201px]" />
        <Tab label="Advanced Designing Mode" w="w-[254px]" active />
        <Tab label="QR Code Marketing Suite" w="w-[241px]" />
      </div>
      {/* ribbon */}
      <div className="h-[71px] shrink-0 bg-gradient-to-b from-[#dde8f5] to-[#f0f5fb] border-t border-[#a9c1de] flex items-center pl-[8px]">
        <div className="self-start mt-[5px] flex gap-[4px]">
          <RibbonGroup title="File Tools" w="w-[517px]" band="pl-[26px]" body="pb-[3px]">
            <Tool w="w-[42px]" icon={icons.new} label="New" />
            <Tool w="w-[40px]" icon={icons.open} label="Open" />
            <Tool w="w-[48px]" icon={icons.save} label="Save" />
            <Tool w="w-[56px]" icon={icons.saveas} label="Save As" />
            <Tool w="w-[100px]" icon={icons.exportImage} label="Export Image" />
            <Tool w="w-[68px]" icon={icons.pdf} label="Export PDF" />
            <Tool w="w-[84px]" icon={icons.printer} label="Print Label" />
            <Tool w="w-[32px]" icon={icons.mail} label="Mail" />
            <Tool w="w-[40px]" icon={icons.exit} label="Exit" />
          </RibbonGroup>
          <RibbonGroup title="Zoom" w="w-[213px]">
            <div className="flex items-center pl-[6px] gap-[16px]">
              {icons.oneToOne}
              {icons.fit}
            </div>
            <div className="ml-[8px] w-[64px] h-[21px] bg-[#e4e4e4] border border-[#b0b0b0] flex items-center pl-[4px]">
              100%
              <ChevronDown size={12} className="ml-auto mr-[3px] text-[#555]" />
            </div>
            <div className="ml-[7px] flex gap-[10px] opacity-90">
              {icons.zoomIn}
              {icons.zoomOut}
            </div>
          </RibbonGroup>
          <RibbonGroup title="Manage List and Series" w="w-[181px]" band="pl-[6px] text-[11px]" body="pb-[9px]">
            <div className="flex items-center pl-[6px] gap-[13px]">
              {icons.list}
              {icons.excelArrow}
              <span className="w-[30px] font-['Liberation_Serif',serif] text-[21px] leading-none italic text-[#222] whitespace-nowrap">Σ<span className="text-[17px]">fx</span></span>
              <span className="ml-[5px]">{icons.swap}</span>
            </div>
          </RibbonGroup>
        </div>
        <div className="ml-[30px] w-[193px] h-[69px] border border-[#c0c4c8] bg-[#eef2f6] flex items-center">
          <div className="w-[187px] h-[63px] bg-gradient-to-b from-[#fdf1b0] via-[#ffd45c] to-[#fbe79a] flex items-center pl-[3px] gap-[4px]">
            <SwitchArt />
            <div className="pt-[6px] text-center font-bold text-[11px] leading-[13.500px] text-[#111] whitespace-nowrap">
              Switch to<br />Barcode<br />Mode
            </div>
          </div>
        </div>
      </div>
      <div className="h-[2px] shrink-0 bg-[#666]" />
      {/* work area */}
      <div className="flex-1 min-h-0 flex border-b-2 border-[#333]">
        <div className="w-[84px] shrink-0 bg-white border-l border-[#333] border-r-2 border-r-[#666] flex flex-col">
          <div className="h-[50px] ml-[3px] mr-[5px] pr-[2px] flex flex-col items-center border-b border-[#9a9a9a] pt-[7px]">
            <span className="h-[24px] font-['Liberation_Serif',serif] font-bold text-[26px] leading-[24px] text-[#5b9ad8]">A</span>
            <span className="leading-[15px] mt-[1px]">Text</span>
          </div>
          {sideItems.map((it) => (
            <SideItem key={it.i} icon={it.i} label={it.l} h={it.h} />
          ))}
          <div className="mt-[48px] ml-[3px] mr-[5px] pr-[2px] border-t border-[#9a9a9a] flex flex-col items-center pt-[5px]">
            {icons.grid}
            <span className="leading-[16px]">Grid</span>
            <span className="mt-[4px]">{icons.ruler}</span>
            <span className="leading-[16px]">Ruler</span>
          </div>
        </div>
        <div className="flex-1 min-w-0 flex flex-col">
          {/* edit toolbar */}
          <div className="h-[48px] shrink-0 bg-white flex items-center">
            <EditTool w="w-[38px]" icon={icons.undo} label="Undo" dim />
            <EditTool w="w-[38px]" icon={icons.redo} label="Redo" dim />
            <EditTool w="w-[36px]" icon={icons.cut} label="Cut" />
            <EditTool w="w-[38px]" icon={icons.copy} label="Copy" />
            <EditTool w="w-[42px]" icon={icons.paste} label="Paste" dim />
            <EditTool w="w-[48px]" icon={icons.del} label="Delete" />
            <div className="w-px h-[44px] ml-[3px] bg-[#aaa]" />
            <EditTool w="w-[62px]" icon={icons.toFront} label="To Front" />
            <EditTool w="w-[58px]" icon={icons.toBack} label="To Back" />
            <EditTool w="w-[34px]" icon={icons.lock} label="Lock" />
            <EditTool w="w-[55px]" icon={icons.unlock} label="Unlock" dim />
            <div className="w-px h-[44px] bg-[#aaa]" />
            <EditTool w="w-[34px]" icon={icons.left} label="Left" />
            <EditTool w="w-[38px]" icon={icons.right} label="Right" />
            <EditTool w="w-[34px]" icon={icons.top} label="Top" />
            <EditTool w="w-[48px]" icon={icons.bottom} label="Bottom" />
            <EditTool w="w-[54px]" icon={icons.center} label="Center" />
            <EditTool w="w-[118px]" icon={icons.centerH} label="Center Horizontally" />
            <EditTool w="w-[107px]" icon={icons.centerV} label="Center Vertically" />
            <div className="w-px h-[44px] ml-[3px] bg-[#aaa]" />
            <div className="w-[138px] flex items-center pl-[10px] pt-[2px] gap-[6px]">
              {icons.bigPrinter}
              <span className="font-bold whitespace-nowrap">Print Label</span>
            </div>
            <div className="w-px h-[44px] bg-[#aaa]" />
          </div>
          <div className="h-[3px] shrink-0 bg-[#666]" />
          <div className="flex-1 min-h-0 flex">
            {/* designer */}
            <div className="w-[464px] shrink-0 bg-[#bdd9f8] flex flex-col border-r border-[#333]">
              <div className="h-[479px] flex pl-[3px] gap-[4px] overflow-hidden">
                <VRuler />
                <div className="flex flex-col pt-[3px]">
                  <HRuler />
                  <div className="flex">
                    <div className="w-[327px] h-[454px] bg-[#c0c0c0] border-l border-t border-[#666]">
                      <Label />
                    </div>
                    <LabelList />
                  </div>
                </div>
              </div>
              <div className="flex-1 flex items-center pl-[3px] pt-[5px]">
                <span className="w-[98px] whitespace-nowrap">Load Excel File :</span>
                <div className="w-[104px] h-[21px] border border-[#888] bg-[#f4f4f4] pl-[3px] leading-[19px] overflow-hidden whitespace-nowrap">C:\Users\IBALL\D</div>
                <div className="ml-[8px]"><SoftButton w="w-[122px]" icon={icons.excel} label="Browse Excel File" /></div>
                <div className="ml-[7px]"><SoftButton w="w-[117px]" icon={icons.excelZoom} label="View Excel Data" /></div>
              </div>
            </div>
            <div className="w-[4px] shrink-0 bg-[#f4f4f4]" />
            {/* properties */}
            <div className="flex-1 min-w-0 bg-[#fdfdff] flex flex-col">
              <div className="h-[28px] shrink-0 bg-[#bdd9f8] flex items-center pl-[10px] pr-[12px] relative">
                <div className="w-[27px] h-[22px] bg-[#e1e1e1] border border-[#b5b5b5] flex items-center justify-center">
                  <svg width="18" height="14" viewBox="0 0 18 14" className="block"><path d="M0 7l8-6v4h10v4H8v4z" fill="#136f94" /></svg>
                </div>
                <div className="absolute left-[131px] top-[-2px] w-[186px] h-[31px] bg-gradient-to-b from-[#cfe8ff] to-[#b4d9fb] border-2 border-[#1e88d8] shadow-[0_0_3px_#4a9fe0] flex items-center justify-center font-['Open_Sans',sans-serif] text-[17px] tracking-[.2px] text-[#222]">
                  Line Properties
                </div>
                <div className="ml-auto w-[138px] h-[25px] pt-[2px] bg-[#e1e1e1] border border-[#c2c2c2] flex items-center justify-center gap-[6px] font-bold text-[#111]">
                  <svg width="17" height="17" viewBox="0 0 24 24" className="block"><path d="M3 7l4-4 5 5 5-5 4 4-5 5 5 5-4 4-5-5-5 5-4-4 5-5z" fill="url(#gRed)" /></svg>
                  Delete Object
                </div>
              </div>
              <div className="flex-1 min-h-0 pl-[6px] pt-[5px] flex flex-col">
                <div className="w-[523px] h-[100px] shrink-0 bg-[#deebfa]">
                  <div className="h-[17px] pl-[8px] font-bold leading-[15px]">Line Direction</div>
                  <div className="ml-[114px] w-[325px] grid grid-cols-[149px_148px] gap-x-[28px] gap-y-[10px]">
                    <DirButton label="Horizontal Line" active pad="pl-[14px]">
                      <div className="w-[21px] h-[2px] bg-black" />
                    </DirButton>
                    <DirButton label="Vertical Line">
                      <div className="w-[2px] h-[21px] bg-black" />
                    </DirButton>
                    <DirButton label="Diagonal Up" pad="pl-[7px]">
                      <svg width="21" height="21" viewBox="0 0 21 21" className="block"><path d="M1 20L20 2" stroke="#000" strokeWidth="1.800" /></svg>
                    </DirButton>
                    <DirButton label="Diagonal Down" pad="pl-[13px]">
                      <svg width="21" height="21" viewBox="0 0 21 21" className="block"><path d="M1 2l19 18" stroke="#000" strokeWidth="1.800" /></svg>
                    </DirButton>
                  </div>
                </div>
                <fieldset className="w-[523px] h-[79px] mt-[6px] shrink-0 border border-[#dedede]">
                  <Legend>Line Color and Width</Legend>
                  <div className="flex items-center h-[22px] mt-[7px]">
                    <span className="w-[113px] pl-[9px] pt-[2px]">Select Color :</span>
                    <div className="w-[43px] h-[21px] border-[3px] border-[#d2d2d2] bg-black" />
                    <div className="ml-[19px] w-[56px] h-[21px] bg-[#e1e1e1] border border-[#cfcfcf] text-center leading-[20px]">....</div>
                  </div>
                  <div className="flex items-center h-[21px] mt-[8px]">
                    <span className="w-[118px] pl-[9px] mb-[4px]">Set Width :</span>
                    <Slider pos="left-0" />
                    <Spin v="1" />
                  </div>
                </fieldset>
                <div className="w-[523px] h-[125px] mt-[7px] shrink-0 bg-[#deebfa] relative flex flex-col pt-[23px] gap-[10px]">
                  <div className="absolute left-0 top-[-5px] w-[147px] h-[24px] bg-[#deebfa] border-2 border-[#3aa0e6] shadow-[0_0_3px_#4a9fe0] flex items-center pl-[6px] font-bold text-[#111] whitespace-nowrap">
                    Line Drawing Option
                  </div>
                  <StyleSelect label="Line Style :" bar={<div className="ml-[7px] w-[119px] h-[2px] bg-black" />} />
                  <StyleSelect label="Start Cap :" bar={<div className="ml-[22px] w-[43px] h-[5px] bg-black" />} />
                  <StyleSelect label="End Cap :" bar={<div className="ml-[22px] w-[43px] h-[5px] bg-black" />} />
                </div>
                <fieldset className="w-[523px] h-[80px] mt-[6px] shrink-0 border border-[#dedede]">
                  <Legend>Rotation and Transparency</Legend>
                  <div className="flex items-center h-[21px] mt-[9px]">
                    <span className="w-[118px] pl-[12px] mb-[4px]">Rotation :</span>
                    <Slider pos="left-[65px]" />
                    <Spin v="0" />
                  </div>
                  <div className="flex items-center h-[21px] mt-[6px]">
                    <span className="w-[118px] pl-[12px] mb-[4px]">Transparency :</span>
                    <Slider pos="right-0" />
                    <Spin v="100" />
                  </div>
                </fieldset>
                <div className="mt-auto mb-[2px] ml-[415px] w-[178px] h-[32px] bg-gradient-to-br from-[#1d4fa0] via-[#12397a] to-[#16478f] flex items-center justify-center font-['Open_Sans',sans-serif] text-[24px] text-white whitespace-nowrap">
                  RecoverData.in
                </div>
              </div>
            </div>
          </div>
        </div>
      </div>
    </div>
  );
}
